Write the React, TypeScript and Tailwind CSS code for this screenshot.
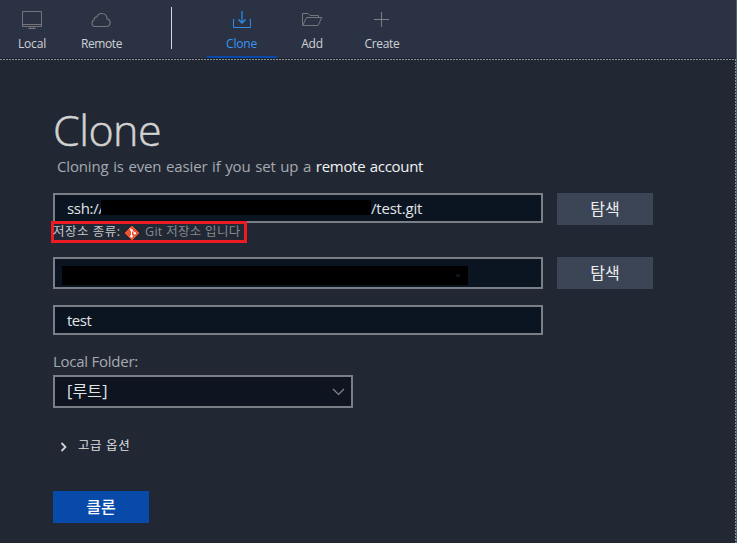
import type { ReactNode } from 'react';

type TabProps = { label: string; icon: ReactNode; active?: boolean; tracking?: string };

function Tab({ label, icon, active = false, tracking = '' }: TabProps) {
  return (
    <button
      className={`flex h-[58px] w-[70px] flex-col items-center border-b-2 pt-[9px] ${
        active ? 'border-[#074aa9] text-[#3b95f2]' : 'border-transparent text-[#d0d2d6]'
      }`}
    >
      <span className={`h-[22px] ${active ? 'text-[#2e8be8]' : 'text-[#74767b]'}`}>{icon}</span>
      <span className={`mt-[4px] text-[12px] leading-[18px] whitespace-nowrap ${tracking}`}>{label}</span>
    </button>
  );
}

const svgProps = {
  width: 22,
  height: 22,
  viewBox: '0 0 22 22',
  fill: 'none',
  stroke: 'currentColor',
  strokeWidth: 1,
};

function MonitorIcon() {
  return (
    <svg {...svgProps}>
      <path d="M1.5 2.5h19v15h-19zM1.5 15.5h19M9.5 17.5v2M12.5 17.5v2M7 19.5h8" />
    </svg>
  );
}

function CloudIcon() {
  return (
    <svg {...svgProps} className="-ml-[3px]">
      <path
        d="M5 17.5h11.200a3.900 3.900 0 0 0 .9-7.700C17 6.600 14.700 4.500 11.800 4.500c-2.300 0-4.200 1.300-5 3.400-1.700 0-2.700 1.200-2.600 2.900-1.400.6-2.200 1.800-2.200 3.500 0 1.900 1.200 3.200 3 3.200z"
        strokeWidth="1.200"
      />
    </svg>
  );
}

function CloneIcon() {
  return (
    <svg {...svgProps}>
      <path d="M3.500 10.500H2.500v8h17v-8H18.500" />
      <path d="M11 2v11" stroke="#2878c8" strokeWidth="1.600" />
      <path d="M7.500 10.500l3.500 3.500 3.500-3.500" strokeWidth="1.500" />
    </svg>
  );
}

function FolderIcon() {
  return (
    <svg {...svgProps}>
      <path d="M1.500 16.500v-12h5.500l2 2h8.500v2M1.500 16.500h15.500l3.800-8H5.500l-3.800 8" />
    </svg>
  );
}

function PlusIcon() {
  return (
    <svg {...svgProps} className="-ml-[2px]">
      <path d="M11.500 3v15M4 10.500h15" stroke="#7d7f84" />
    </svg>
  );
}

function GitIcon() {
  return (
    <svg width="16" height="16" viewBox="0 0 16 16" fill="none">
      <path d="M8 1l7 7-7 7-7-7z" fill="#f0512f" stroke="#f0512f" strokeLinejoin="round" />
      <path d="M5.500 3l2 2v6M8 5.500l3 3" stroke="#fff" />
      <circle cx="7.500" cy="5.200" r="1.200" fill="#fff" />
      <circle cx="7.500" cy="11.300" r="1.300" fill="#fff" />
      <circle cx="10.800" cy="8.300" r="1.200" fill="#fff" />
    </svg>
  );
}

function BrowseButton() {
  return (
    <button className="ml-[14px] h-8 w-24 bg-[#3b4555] pb-px text-center text-[16px] text-[#eceef0]">
      탐색
    </button>
  );
}

export default function App() {
  return (
    <div className="flex h-[543px] w-[737px] overflow-hidden bg-[#212834] font-['Open_Sans','Noto_Sans_CJK_KR',sans-serif]">
      <div className="flex w-[735px] flex-none flex-col">
        <header className="flex h-[58px] flex-none bg-[#2a3244]">
          <div className="-ml-[3px] flex">
            <Tab label="Local" icon={<MonitorIcon />} tracking="tracking-[-0.200px]" />
            <Tab label="Remote" icon={<CloudIcon />} tracking="-ml-px tracking-[-0.400px]" />
          </div>
          <div className="mt-[7px] mr-[35px] ml-[34px] h-[42px] w-px bg-[#d3d6dc]" />
          <div className="flex">
            <Tab label="Clone" icon={<CloneIcon />} active tracking="-ml-px tracking-[-0.200px]" />
            <Tab label="Add" icon={<FolderIcon />} tracking="tracking-[-0.200px]" />
            <Tab label="Create" icon={<PlusIcon />} tracking="tracking-[-0.300px]" />
          </div>
        </header>
        <div className="h-px flex-none bg-[#1b222d]" />
        <div className="h-px flex-none bg-[repeating-linear-gradient(90deg,#8c8f95_0px,#8c8f95_2px,#212834_2px,#212834_3px)]" />

        <main className="flex flex-col items-start pl-[53px]">
          <h1 className="mt-[40px] h-[55px] text-[43px] leading-[60px] font-light tracking-[-0.500px] text-[#d2d2d2] [-webkit-text-stroke:0.500px_#d2d2d2]">
            Clone
          </h1>
          <p className="ml-1 h-[38px] text-[15px] leading-[22px] tracking-[-0.150px] whitespace-nowrap text-[#a6aab0] [word-spacing:0.900px]">
            Cloning is even easier if you set up a{' '}
            <span className="tracking-[-0.300px] text-[#f1f2f3]">remote account</span>
          </p>

          <div className="flex h-8">
            <div className="flex h-[30px] w-[490px] items-center border-2 border-[#7a7f87] bg-[#0b1421] pl-3 text-[15px] text-[#e2e4e6]">
              <span className="w-[34px] flex-none tracking-[-0.300px]">ssh://</span>
              <span className="-mt-px flex h-[15px] w-[270px] flex-none bg-black" />
              <span className="tracking-[-0.200px]">/test.git</span>
            </div>
            <BrowseButton />
          </div>

          <div className="-mt-[4px] -ml-[2px] flex h-[22px] w-[196px] items-center border-[3px] border-[#ed1c24] text-[12.500px] whitespace-nowrap text-[#c6c8cb]">
            <span className="-ml-px w-[71px] flex-none tracking-[0.500px]">저장소 종류:</span>
            <span className="flex-none pt-px"><GitIcon /></span>
            <span className="ml-[5px] tracking-[0.300px] text-[#858a91]">Git 저장소 입니다</span>
          </div>

          <div className="mt-[14px] flex h-8">
            <div className="flex h-8 w-[490px] items-center border-2 border-[#7a7f87] bg-[#0b1421] pl-[7px]">
              <div className="mt-[5px] flex h-[19px] w-[406px] items-center justify-end bg-black pr-2">
                <span className="h-[3px] w-1 bg-[#0b1421]" />
              </div>
            </div>
            <BrowseButton />
          </div>

          <div className="mt-[16px] flex h-[30px] w-[490px] items-center border-2 border-[#7a7f87] bg-[#0b1421] pl-3 text-[15px] tracking-[-0.500px] text-[#e2e4e6]">
            test
          </div>

          <label className="mt-[15px] h-[25px] text-[15px] leading-[22px] tracking-[-0.250px] text-[#a6aab0]">
            Local Folder:
          </label>
          <div className="flex h-[33px] w-[300px] items-center justify-between border-2 border-[#7a7f87] bg-[#0e1420] pr-[6px] pl-3 text-[16px] text-[#e2e4e6]">
            <span className="pb-px tracking-[0.200px]">[루트]</span>
            <svg width="13" height="8" viewBox="0 0 13 8" fill="none" stroke="#85898f" strokeWidth="1.200">
              <path d="M1 1l5.500 5.500L12 1" />
            </svg>
          </div>

          <div className="mt-[28px] ml-[7px] flex h-[20px] items-center text-[12.500px] text-[#dcdee0]">
            <svg className="mt-px" width="8" height="10" viewBox="0 0 8 10" fill="none" stroke="#d0d2d4" strokeWidth="1.800">
              <path d="M1.500 1l4 4-4 4" />
            </svg>
            <span className="ml-[10px] tracking-[0.600px]">고급 옵션</span>
          </div>

          <button className="mt-[35px] h-8 w-24 bg-[#074aa9] pb-px text-[16px] font-medium text-white">클론</button>
        </main>
      </div>
      <div className="flex w-px flex-none flex-col">
        <div className="h-[59px] bg-[#2a3244]" />
        <div className="flex-1 bg-[repeating-linear-gradient(180deg,#8c8f95_0px,#8c8f95_2px,#212834_2px,#212834_3px)]" />
      </div>
      <div className="w-px flex-none bg-[#426080]" />
    </div>
  );
}
